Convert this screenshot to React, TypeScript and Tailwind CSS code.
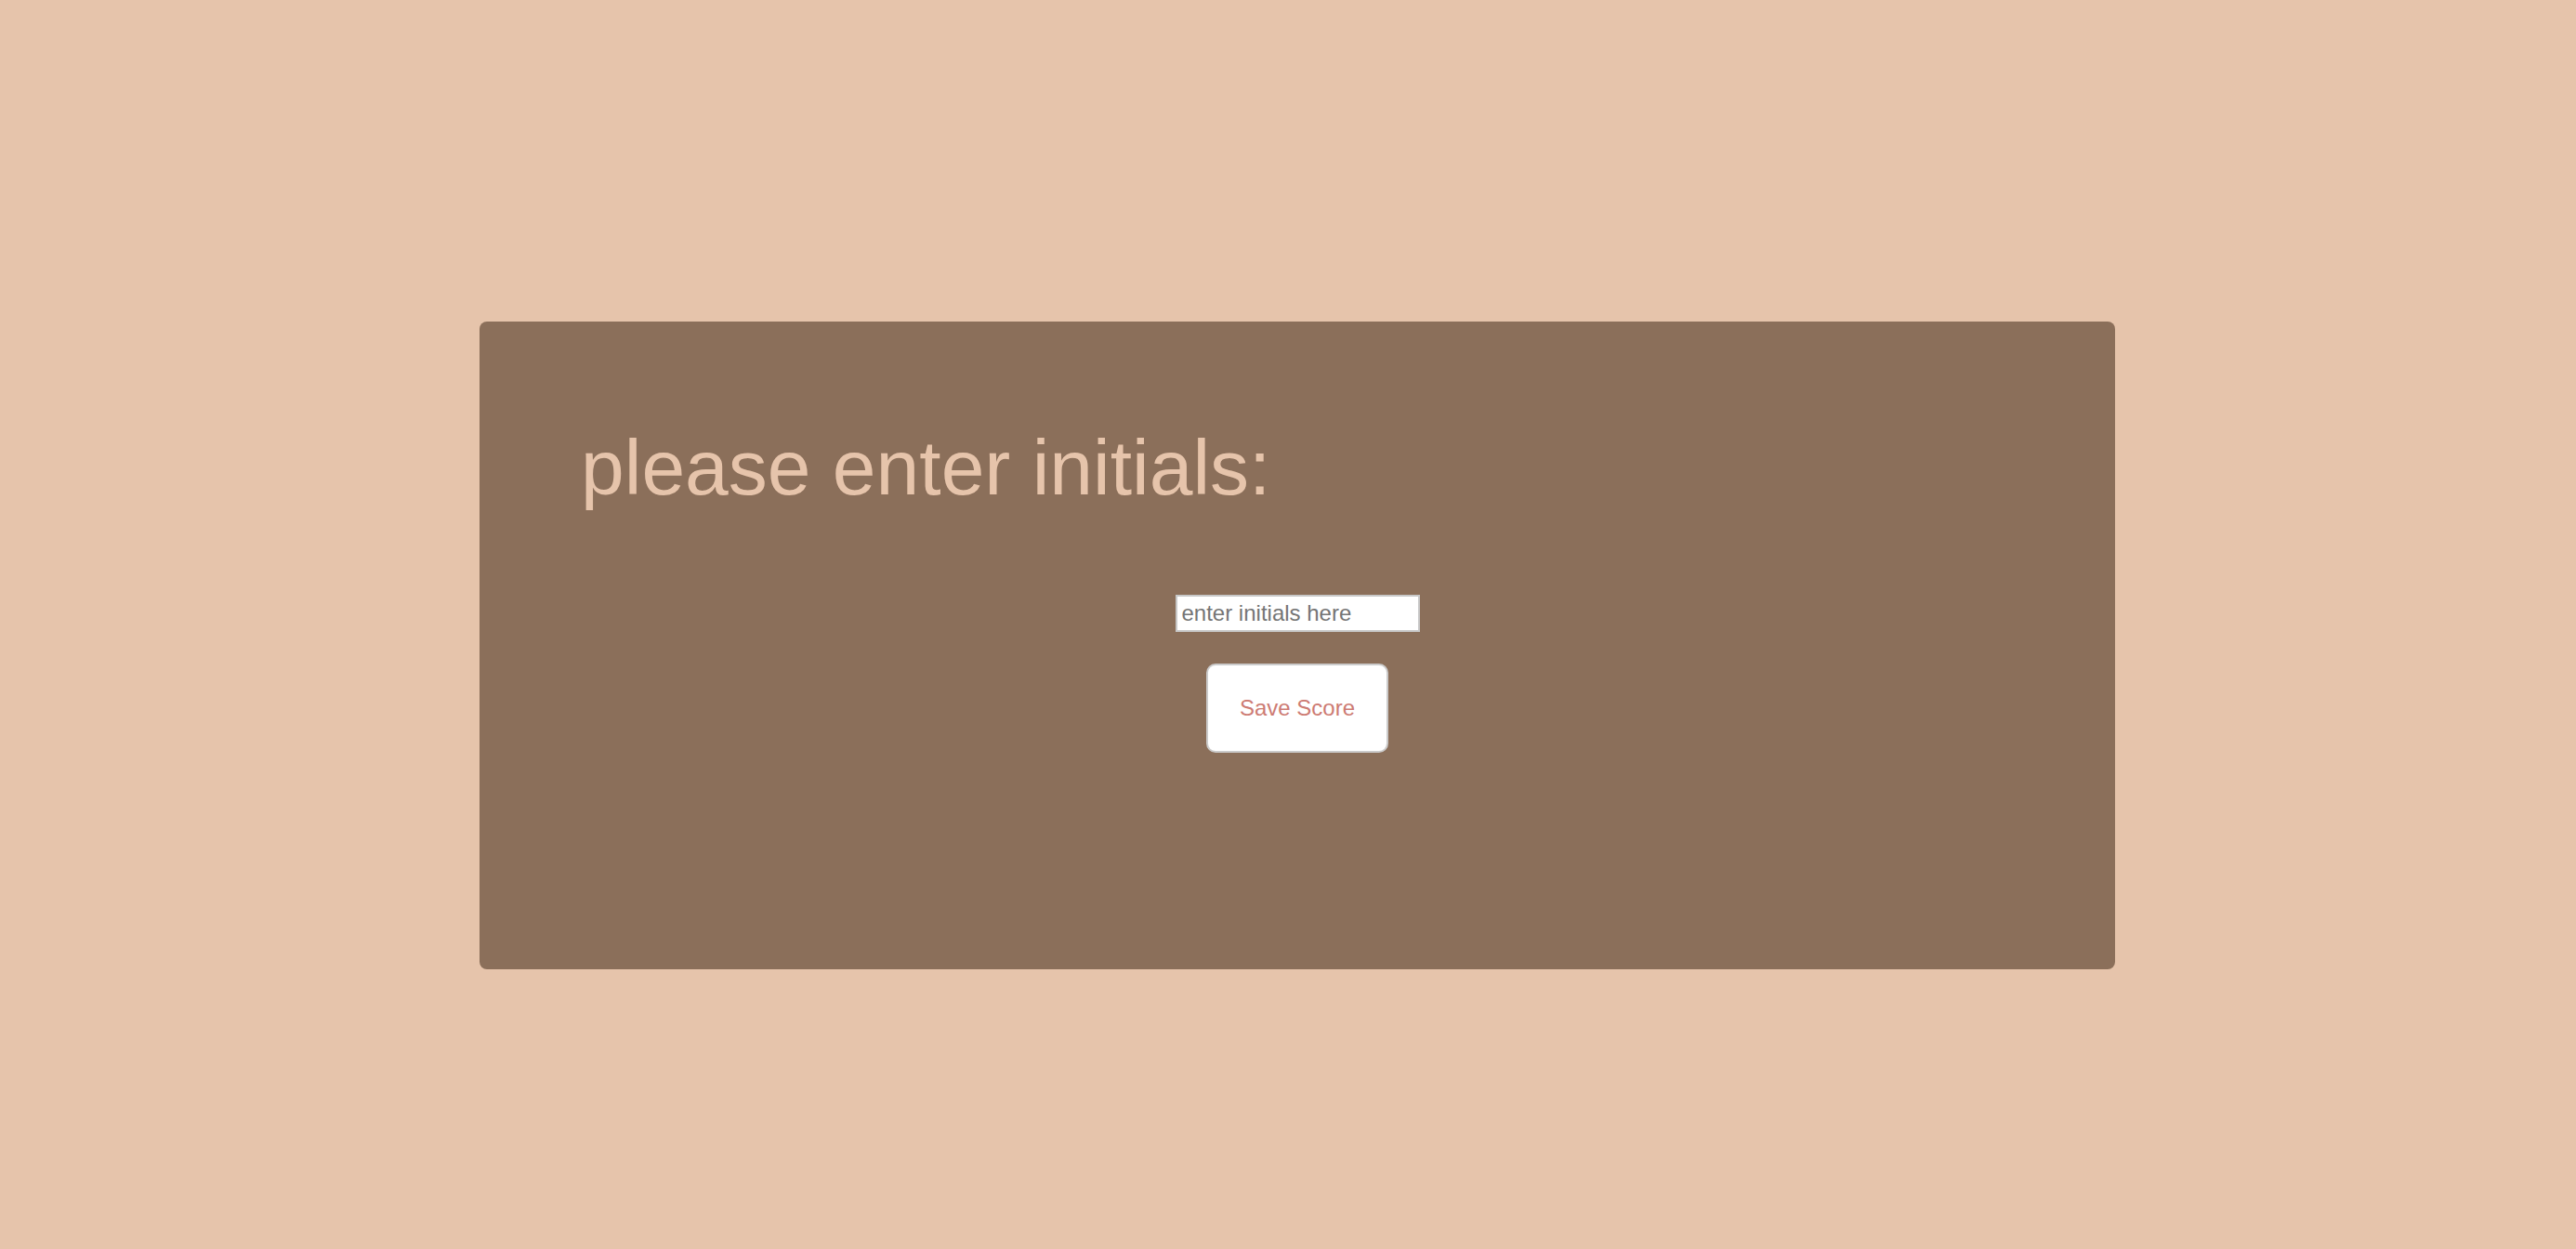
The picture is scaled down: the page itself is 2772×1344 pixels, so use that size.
import React from "react";

export default function App() {
  return (
    <div className="min-h-screen w-full bg-[#e6c4ab] flex justify-center pt-[346px] pl-[20px]" style={{ fontFamily: '"Liberation Sans", Arial, sans-serif' }}>
      <div className="w-[1760px] h-[697px] bg-[#8b6f5a] rounded-[8px] flex flex-col pt-[109px]">
        <h1 className="m-0 pl-[109px] text-[84px] leading-[normal] font-normal text-[#e6c4ab]">please enter initials:</h1>
        <input
          type="text"
          placeholder="enter initials here"
          className="self-center mt-[88px] w-[263px] h-[40px] bg-white border-2 border-[#c8c8c8] px-[5px] text-[24px] text-[#333] placeholder:text-[#757575] outline-none"
        />
        <button className="self-center mt-[34px] w-[196px] h-[96px] bg-white border-2 border-[#cbcbcb] rounded-[10px] text-[24px] text-[#cd7b73]">
          Save Score
        </button>
      </div>
    </div>
  );
}
